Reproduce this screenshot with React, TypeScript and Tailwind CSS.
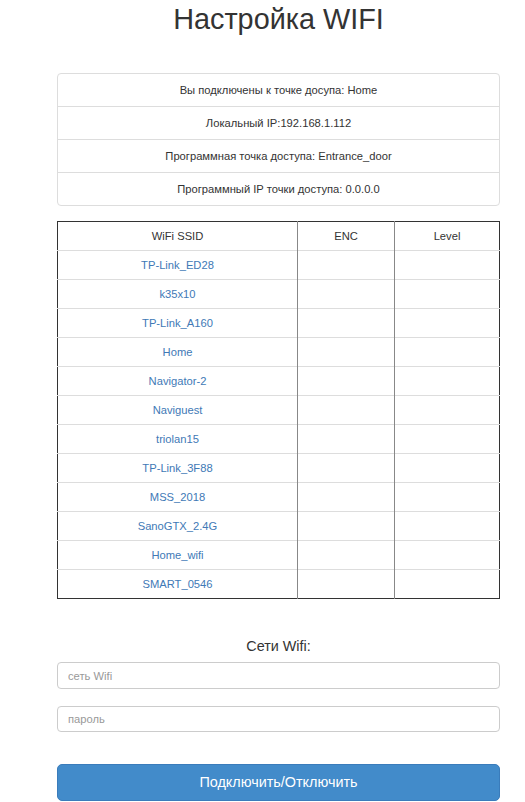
import React from 'react';

const info = [
  'Вы подключены к точке досупа: Home',
  'Локальный IP:192.168.1.112',
  'Программная точка доступа: Entrance_door',
  'Программный IP точки доступа: 0.0.0.0',
];

const networks = [
  'TP-Link_ED28',
  'k35x10',
  'TP-Link_A160',
  'Home',
  'Navigator-2',
  'Naviguest',
  'triolan15',
  'TP-Link_3F88',
  'MSS_2018',
  'SanoGTX_2.4G',
  'Home_wifi',
  'SMART_0546',
];

export default function App() {
  return (
    <div className="min-h-screen bg-white font-['Liberation_Sans',Arial,sans-serif] text-[#333]">
      <div className="ml-[57px] w-[443px] pb-px">
        <h1 className="h-[36px] pt-px text-center text-[28.8px] leading-[36px] text-[#333]">Настройка WIFI</h1>

        {/* status list */}
        <ul className="mt-[37px] rounded border border-[#ddd]">
          {info.map((text, i) => (
            <li
              key={text}
              className={`text-center text-[11.2px] ${i > 0 ? 'h-[33px] border-t border-[#ddd] leading-[32px]' : 'h-[32px] leading-[32px]'}`}
            >
              {text}
            </li>
          ))}
        </ul>

        {/* networks table */}
        <table className="mt-[15px] w-full border-collapse border border-[#333] text-[11.2px]">
          <thead>
            <tr className="h-[29px]">
              <th className="w-[240px] border-r border-[#888] font-normal">WiFi SSID</th>
              <th className="w-[97px] border-r border-[#888] font-normal">ENC</th>
              <th className="font-normal">Level</th>
            </tr>
          </thead>
          <tbody>
            {networks.map((name) => (
              <tr key={name} className="h-[29px] border-t border-[#ddd]">
                <td className="border-r border-[#888] text-center">
                  <a href="#" className="text-[#4179b6]">{name}</a>
                </td>
                <td className="border-r border-[#888]" />
                <td />
              </tr>
            ))}
          </tbody>
        </table>

        {/* connect form */}
        <div className="mt-[37px] text-center text-[14.4px] leading-[20px]">Сети Wifi:</div>
        <input
          className="mt-[6px] block h-[27px] w-full rounded border border-[#ccc] px-[10px] text-[11.2px] placeholder:text-[#999]"
          placeholder="сеть Wifi"
        />
        <input
          className="mt-[17px] block h-[26px] w-full rounded border border-[#ccc] px-[10px] text-[11.2px] placeholder:text-[#999]"
          placeholder="пароль"
        />
        <button className="mt-[32px] block h-[37px] w-full rounded-[5px] border border-[#3a7cbb] bg-[#428bca] text-[14.4px] text-white">
          Подключить/Отключить
        </button>
      </div>
    </div>
  );
}
